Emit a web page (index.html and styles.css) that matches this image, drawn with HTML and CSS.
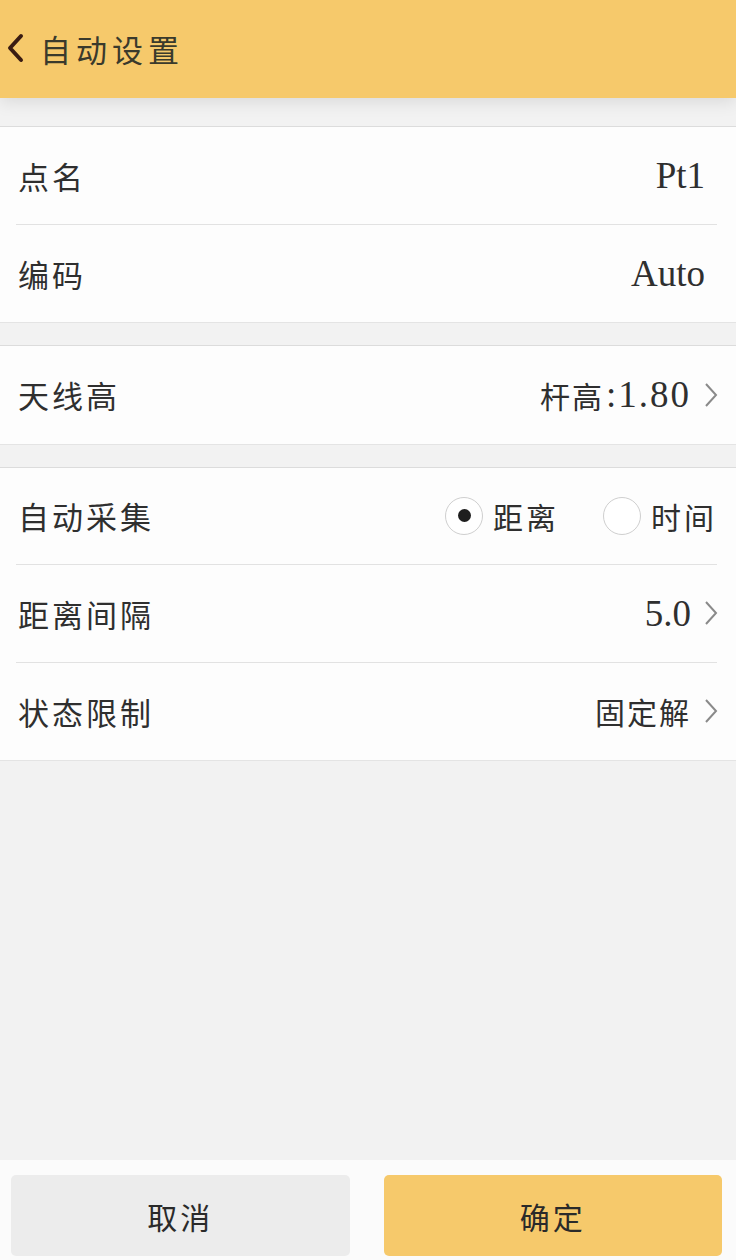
FILE: index.html
```html
<!DOCTYPE html>
<html lang="zh-CN">
<head>
<meta charset="utf-8">
<title>自动设置</title>
<link rel="stylesheet" href="styles.css">
</head>
<body>
<div class="app">
  <header class="topbar">
    <svg class="back" viewBox="0 0 20 30" width="20" height="30"><path d="M15 3 L4 15 L15 27" fill="none" stroke="#3a1c12" stroke-width="4" stroke-linecap="round" stroke-linejoin="round"/></svg>
    <span class="title">自动设置</span>
  </header>
  <main class="content">
    <section class="group">
      <div class="row"><span class="label">点名</span><span class="value latin">Pt1</span></div>
      <div class="row"><span class="label">编码</span><span class="value latin">Auto</span></div>
    </section>
    <section class="group">
      <div class="row"><span class="label">天线高</span><span class="value link"><span class="cjk">杆高</span><span class="latin wide">:1.80</span><svg class="chev" viewBox="0 0 14 26" width="14" height="26"><path d="M2 2 L12 13 L2 24" fill="none" stroke="#8a8a8a" stroke-width="2"/></svg></span></div>
    </section>
    <section class="group">
      <div class="row"><span class="label">自动采集</span>
        <span class="radios">
          <span class="radio"><span class="circle on"></span><span class="rtext">距离</span></span>
          <span class="radio"><span class="circle"></span><span class="rtext">时间</span></span>
        </span>
      </div>
      <div class="row"><span class="label">距离间隔</span><span class="value link"><span class="latin">5.0</span><svg class="chev" viewBox="0 0 14 26" width="14" height="26"><path d="M2 2 L12 13 L2 24" fill="none" stroke="#8a8a8a" stroke-width="2"/></svg></span></div>
      <div class="row"><span class="label">状态限制</span><span class="value link"><span class="cjk">固定解</span><svg class="chev" viewBox="0 0 14 26" width="14" height="26"><path d="M2 2 L12 13 L2 24" fill="none" stroke="#8a8a8a" stroke-width="2"/></svg></span></div>
    </section>
  </main>
  <footer class="footer">
    <button class="btn cancel">取消</button>
    <button class="btn ok">确定</button>
  </footer>
</div>
</body>
</html>
```
FILE: styles.css
```css
* { box-sizing: border-box; }
html, body { margin: 0; padding: 0; }
body {
  background: #f2f2f2;
  font-family: "Liberation Serif", "Noto Sans CJK SC", serif;
  color: #2e2e2e;
}
.app {
  height: 1260px;
  display: flex;
  flex-direction: column;
}
.topbar {
  height: 98px;
  flex: none;
  background: #f6c96b;
  display: flex;
  align-items: center;
  padding-left: 6px;
  gap: 14px;
  box-shadow: 0 4px 16px rgba(0,0,0,0.10);
  position: relative;
  z-index: 1;
}
.back { margin-top: -2px; }
.title {
  font-family: "Noto Sans CJK SC", sans-serif;
  font-size: 31px;
  letter-spacing: 5px;
  color: #3a3a2c;
  margin-top: -2px;
}
.content {
  flex: 1;
  padding-top: 28px;
  display: flex;
  flex-direction: column;
  gap: 22px;
}
.group {
  background: #fdfdfd;
  border-top: 1px solid #dcdcdc;
  border-bottom: 1px solid #e4e4e4;
}
.row {
  height: 97.5px;
  margin-left: 16px;
  margin-right: 19px;
  display: flex;
  align-items: center;
  justify-content: space-between;
  border-bottom: 1px solid #e2e2e2;
}
.row:last-child { border-bottom: none; }
.label {
  font-family: "Noto Sans CJK SC", sans-serif;
  font-size: 31px;
  letter-spacing: 3px;
  padding-left: 2px;
  color: #2f2f2f;
}
.value {
  display: flex;
  align-items: center;
  color: #2f2f2f;
}
.value.latin { font-size: 37px; padding-right: 12px; }
.latin { font-size: 37px; font-family: "Liberation Serif", serif; }
.latin.wide { letter-spacing: 2px; margin-left: 2px; }
.cjk {
  font-family: "Noto Sans CJK SC", sans-serif;
  font-size: 30px;
  letter-spacing: 2px;
}
.chev { margin-left: 13px; margin-right: -1px; }
.radios { display: flex; align-items: center; gap: 44px; margin-right: 0; }
.radio { display: flex; align-items: center; gap: 10px; }
.circle {
  width: 38px; height: 38px;
  border-radius: 50%;
  border: 1.5px solid #cfcfcf;
  background: #fff;
  display: flex; align-items: center; justify-content: center;
}
.circle.on::after {
  content: "";
  width: 13px; height: 13px;
  border-radius: 50%;
  background: #1e1e1e;
}
.rtext {
  font-family: "Noto Sans CJK SC", sans-serif;
  font-size: 30px;
  letter-spacing: 3px;
  color: #2f2f2f;
}
.footer {
  flex: none;
  height: 100px;
  background: #fbfbfb;
  display: flex;
  gap: 34px;
  padding: 15px 14px 4px 11px;
}
.btn {
  flex: 1;
  border: none;
  border-radius: 5px;
  font-family: "Noto Sans CJK SC", sans-serif;
  font-size: 30px;
  letter-spacing: 3px;
  color: #2a2a2a;
}
.btn.cancel { background: #ececec; }
.btn.ok { background: #f6c96b; }
```
